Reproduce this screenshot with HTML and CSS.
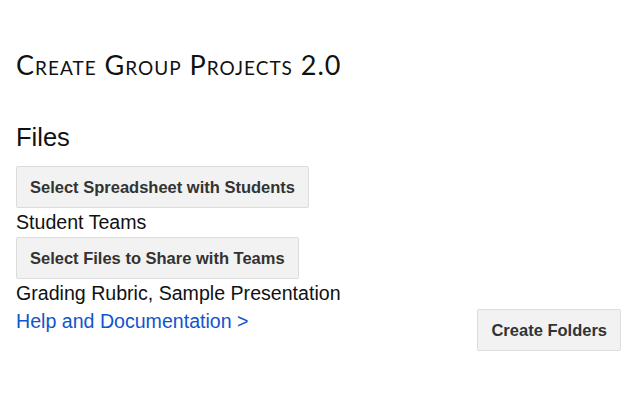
FILE: index.html
```html
<!DOCTYPE html>
<html>
<head>
<meta charset="utf-8">
<link rel="stylesheet" href="styles.css">
</head>
<body>
<div class="page">
  <h1 class="title">Create Group Projects 2.0</h1>
  <h2 class="section">Files</h2>
  <button class="btn btn-first">Select Spreadsheet with Students</button>
  <div class="note">Student Teams</div>
  <button class="btn btn-second">Select Files to Share with Teams</button>
  <div class="note">Grading Rubric, Sample Presentation</div>
  <div class="footer">
    <a class="help" href="#">Help and Documentation &gt;</a>
    <button class="btn btn-create">Create Folders</button>
  </div>
</div>
</body>
</html>
```
FILE: styles.css
```css
html, body {
  margin: 0;
  padding: 0;
  background: #fff;
}
.page {
  width: 640px;
  height: 400px;
  box-sizing: border-box;
  padding: 48px 19px 0 16px;
  font-family: "Liberation Sans", Arial, sans-serif;
  color: #111;
}
.title {
  margin: 0;
  font-family: Lato, "Open Sans", sans-serif;
  font-variant: small-caps;
  font-weight: 400;
  font-size: 27px;
  line-height: 34px;
  letter-spacing: 1px;
  color: #111;
}
.section {
  margin: 40px 0 0 0;
  font-weight: 400;
  font-size: 25.5px;
  line-height: 30px;
}
.btn {
  display: block;
  font-family: "Liberation Sans", Arial, sans-serif;
  font-weight: 700;
  font-size: 16.5px;
  color: #333;
  background: #f2f2f2;
  border: 1px solid #dcdcdc;
  border-radius: 2px;
  height: 42px;
  padding: 0 13px;
  margin: 0;
}
.btn-first {
  margin-top: 14px;
}
.note {
  font-size: 19.6px;
  line-height: 29px;
  color: #111;
}
.footer {
  display: flex;
  justify-content: space-between;
  align-items: flex-start;
}
.help {
  color: #1155cc;
  text-decoration: none;
  font-size: 19.6px;
  line-height: 27px;
}
.btn-create {
  margin-top: 1px;
}
```
